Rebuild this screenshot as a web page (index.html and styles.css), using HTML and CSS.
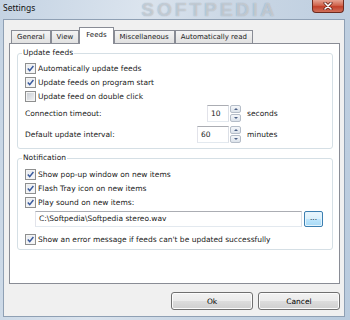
FILE: index.html
```html
<!doctype html>
<html>

<head>
  <title>Settings</title>
  <link rel="stylesheet" href="styles.css">
</head>

<body>
  <div class="window">
    <div class="titlebar">
      <span class="title">Settings</span>
      <span class="watermark">SOFTPEDIA</span>
      <span class="close">
        <svg width="10" height="8" viewBox="0 0 10 8">
          <path d="M2 1 L8 7 M8 1 L2 7" stroke="#5a1a10" stroke-width="3" stroke-linecap="round"/>
          <path d="M2 1 L8 7 M8 1 L2 7" stroke="#fff" stroke-width="1.6" stroke-linecap="round"/>
        </svg>
      </span>
    </div>

    <div class="client">
      <div class="tabs">
        <div class="tab">General</div>
        <div class="tab">View</div>
        <div class="tab active">Feeds</div>
        <div class="tab">Miscellaneous</div>
        <div class="tab">Automatically read</div>
      </div>

      <div class="panel">
        <!-- update feeds -->
        <fieldset class="group">
          <legend>Update feeds</legend>
          <div class="check-row"><span class="check on"><svg viewBox="0 0 9 9"><path d="M1.8 4.6 L3.7 6.6 L7.4 2"/></svg></span>Automatically update feeds</div>
          <div class="check-row"><span class="check on"><svg viewBox="0 0 9 9"><path d="M1.8 4.6 L3.7 6.6 L7.4 2"/></svg></span>Update feeds on program start</div>
          <div class="check-row"><span class="check"></span>Update feed on double click</div>
          <div class="num-row">
            <span class="num-label">Connection timeout:</span>
            <span class="num">
              <span class="num-value">10</span>
              <span class="spin"><span><i class="up"></i></span><span><i class="down"></i></span></span>
            </span>
            <span class="unit">seconds</span>
          </div>
          <div class="num-row second">
            <span class="num-label">Default update interval:</span>
            <span class="num">
              <span class="num-value wide">60</span>
              <span class="spin"><span><i class="up"></i></span><span><i class="down"></i></span></span>
            </span>
            <span class="unit">minutes</span>
          </div>
        </fieldset>

        <!-- notification -->
        <fieldset class="group notify">
          <legend>Notification</legend>
          <div class="check-row"><span class="check on"><svg viewBox="0 0 9 9"><path d="M1.8 4.6 L3.7 6.6 L7.4 2"/></svg></span>Show pop-up window on new items</div>
          <div class="check-row"><span class="check on"><svg viewBox="0 0 9 9"><path d="M1.8 4.6 L3.7 6.6 L7.4 2"/></svg></span>Flash Tray icon on new items</div>
          <div class="check-row"><span class="check on"><svg viewBox="0 0 9 9"><path d="M1.8 4.6 L3.7 6.6 L7.4 2"/></svg></span>Play sound on new items:</div>
          <div class="path-row">
            <span class="path">C:\Softpedia\Softpedia stereo.wav</span>
            <span class="browse">...</span>
          </div>
          <div class="check-row last"><span class="check on"><svg viewBox="0 0 9 9"><path d="M1.8 4.6 L3.7 6.6 L7.4 2"/></svg></span>Show an error message if feeds can't be updated successfully</div>
        </fieldset>
      </div>

      <div class="actions">
        <button type="button">Ok</button>
        <button type="button">Cancel</button>
      </div>
    </div>
  </div>
</body>

</html>
```

FILE: styles.css
```css
body {
  margin: 0;
  font-family: "DejaVu Sans", sans-serif;
  font-size: 7.5px;
  color: #1a1a1a;
}

.window {
  width: 350px;
  height: 320px;
  box-sizing: border-box;
  padding: 0 5px 3px 3px;
  display: flex;
  flex-direction: column;
  background: linear-gradient(100deg, #c4d3e3 0%, #dbe4ee 35%, #c9d6e4 60%, #b9cbde 100%);
}

/* title bar */
.titlebar {
  height: 19px;
  flex-shrink: 0;
  display: flex;
  align-items: flex-start;
  overflow: hidden;
}

.title {
  font-family: "Noto Sans", sans-serif;
  font-size: 8.5px;
  line-height: 12px;
  padding-top: 2px;
  color: #111;
}

.watermark {
  margin-left: 106px;
  font-family: "Liberation Sans", sans-serif;
  font-weight: bold;
  font-size: 19px;
  line-height: 19px;
  letter-spacing: 3px;
  color: rgba(255, 255, 255, 0.45);
  text-shadow: 0 0 1px rgba(90, 110, 130, 0.6);
}

.close {
  margin-left: auto;
  margin-right: 1px;
  width: 32px;
  height: 13px;
  box-sizing: border-box;
  border: 1px solid #6d2a1e;
  border-top: none;
  border-radius: 0 0 4px 4px;
  background: linear-gradient(#e6a392, #d0644c 45%, #c2402a 55%, #d0705a);
  display: flex;
  align-items: center;
  justify-content: center;
}

/* client area */
.client {
  flex: 1;
  display: flex;
  flex-direction: column;
  background: #f0f0f0;
  border: 1px solid #8fa0b4;
  padding: 7px 4px 6px 5px;
}

.tabs {
  display: flex;
  align-items: flex-end;
  padding-left: 2px;
  margin-bottom: -1px;
  position: relative;
  z-index: 1;
}

.tab {
  height: 12px;
  line-height: 12px;
  padding: 0 5px;
  font-size: 7px;
  border: 1px solid #898c95;
  background: linear-gradient(#f4f4f4, #e1e1e1);
}

.tab.active {
  height: 16px;
  line-height: 14px;
  padding: 0 6px;
  background: #fff;
  border-bottom: none;
}

.panel {
  flex: 1;
  background: #fff;
  border: 1px solid #898c95;
  padding: 3px 6px 0 7px;
}

.group {
  margin: 0;
  min-width: 0;
  padding: 2px 7px 5px 7px;
  border: 1px solid #d5dfe5;
  border-radius: 3px;
}

.group legend {
  padding: 0 1px;
  margin-left: -3px;
  line-height: 12px;
}

.notify {
  margin-top: 3px;
  padding-top: 3px;
  padding-bottom: 3px;
}

.check-row {
  display: flex;
  align-items: center;
  height: 14px;
}

.check {
  width: 11px;
  height: 11px;
  box-sizing: border-box;
  margin-right: 2px;
  border: 1px solid #8e8f8f;
  box-shadow: inset 0 0 0 1px #f4f4f4;
  background: linear-gradient(135deg, #c5cad1, #f4f5f6);
}

.check.on {
  background: linear-gradient(135deg, #e4e8ee, #fbfbfc);
}

.check svg {
  display: block;
  width: 9px;
  height: 9px;
}

.check svg path {
  fill: none;
  stroke: #3a5a9c;
  stroke-width: 1.5;
}

/* numeric fields */
.num-row {
  display: flex;
  align-items: center;
  height: 17px;
  margin-top: 2px;
}

.num-row.second {
  margin-top: 4px;
}

.num-label {
  flex: 1;
}

.num {
  display: flex;
  height: 17px;
}

.num-value {
  width: 22px;
  box-sizing: border-box;
  border: 1px solid #abadb3;
  border-color: #abadb3 #dbdfe6 #e3e9ef #e2e3ea;
  background: #fff;
  padding-left: 3px;
  line-height: 15px;
}

.num-value.wide {
  width: 32px;
}

.spin {
  width: 11px;
  margin-left: 1px;
  display: flex;
  flex-direction: column;
  gap: 1px;
}

.spin span {
  flex: 1;
  border: 1px solid #b5bdc8;
  border-radius: 2px;
  background: linear-gradient(#f5f7fa, #dce3eb);
  display: flex;
  align-items: center;
  justify-content: center;
}

.spin i {
  width: 0;
  height: 0;
  border-left: 2px solid transparent;
  border-right: 2px solid transparent;
}

.spin i.up {
  border-bottom: 2px solid #4d6185;
}

.spin i.down {
  border-top: 2px solid #4d6185;
}

.unit {
  width: 78px;
  margin-left: 6px;
}

/* sound file */
.path-row {
  display: flex;
  gap: 2px;
  height: 16px;
  margin: 2px 2px 0 10px;
}

.path {
  flex: 1;
  border: 1px solid #abadb3;
  border-color: #abadb3 #dbdfe6 #e3e9ef #e2e3ea;
  background: #fff;
  padding-left: 3px;
  line-height: 14px;
}

.browse {
  width: 19px;
  box-sizing: border-box;
  border: 1px solid #3c7fb1;
  border-radius: 2px;
  box-shadow: inset 0 0 0 1px #e4f4fd;
  background: linear-gradient(#eaf6fd, #d9f0fc 50%, #bee6fd 50%, #a7d9f5);
  text-align: center;
  line-height: 12px;
}

.check-row.last {
  margin-top: 5px;
}

/* dialog buttons */
.actions {
  display: flex;
  justify-content: flex-end;
  gap: 5px;
  margin-top: 8px;
}

.actions button {
  width: 82px;
  height: 18px;
  padding: 0;
  border: 1px solid #707070;
  border-radius: 3px;
  box-shadow: inset 0 0 0 1px #fcfcfc;
  background: linear-gradient(#f2f2f2 0%, #ebebeb 50%, #dddddd 50%, #cfcfcf 100%);
  font-family: inherit;
  font-size: 7.5px;
  color: #000;
}
```
